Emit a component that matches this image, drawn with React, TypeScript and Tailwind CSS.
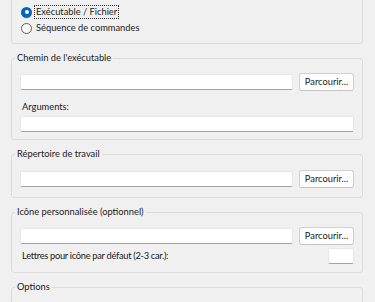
import React from "react";

const font = "[font-family:Lato,'Noto_Sans',sans-serif]";
const ts = "text-[9.3px]";

function Input({ className = "" }: { className?: string }) {
  return (
    <div
      className={`h-[16px] bg-white border border-[#e6e6e6] border-b-[#a3a3a3] rounded-[2px] ${className}`}
    />
  );
}

function Browse() {
  return (
    <button className={`h-[18px] w-[55px] shrink-0 bg-[#fdfdfd] border border-[#d0d0d0] border-b-[#c4c4c4] rounded-[3px] ${ts} leading-[16px] text-[#1a1a1a] text-center`}>
      Parcourir...
    </button>
  );
}

function Group({
  title,
  className = "",
  children,
}: {
  title: string;
  className?: string;
  children?: React.ReactNode;
}) {
  return (
    <fieldset
      className={`border border-[#dcdcdc] rounded-[3px] pl-[8px] pr-[8px] ${className}`}
    >
      <legend className={`ml-[-5px] px-[2px] ${ts} leading-[16px] text-[#1a1a1a]`}>
        {title}
      </legend>
      {children}
    </fieldset>
  );
}

function Radio({ checked, label, focus }: { checked?: boolean; label: string; focus?: boolean }) {
  return (
    <div className="h-[16px] flex items-center">
      {checked ? (
        <span className="ml-[1px] w-[11px] h-[11px] rounded-full bg-[#0067c0] flex items-center justify-center">
          <span className="w-[4px] h-[4px] rounded-full bg-white" />
        </span>
      ) : (
        <span className="ml-[1px] w-[11px] h-[11px] rounded-full border border-[#5f5f5f] bg-[#f7f7f7]" />
      )}
      <span
        className={`ml-[3px] px-[1px] ${ts} leading-[12px] text-[#1a1a1a] ${
          focus ? "outline outline-1 outline-dotted outline-[#333]" : ""
        }`}
      >
        {label}
      </span>
    </div>
  );
}

export default function App() {
  return (
    <div className={`w-[375px] h-[302px] overflow-hidden bg-[#f0f0f0] ${font}`}>
      <div className="pl-[11px] pr-[12px]">
        <div className="mt-[-20px] border border-[#dcdcdc] rounded-[3px] pl-[8px] pt-[23px] pb-[7px]">
          <Radio checked focus label="Exécutable / Fichier" />
          <Radio label="Séquence de commandes" />
        </div>

        <Group title="Chemin de l'exécutable" className="mt-[6px] pt-[7px] pb-[7px]">
          <div className="h-[18px] flex items-center gap-[6px]">
            <Input className="flex-1" />
            <Browse />
          </div>
          <div className={`mt-[8px] ml-[2px] ${ts} leading-[16px] text-[#1a1a1a]`}>Arguments:</div>
          <Input className="mt-[1px]" />
        </Group>

        <Group title="Répertoire de travail" className="mt-[6px] pt-[8px] pb-[9px]">
          <div className="h-[18px] flex items-center gap-[6px]">
            <Input className="flex-1" />
            <Browse />
          </div>
        </Group>

        <Group title="Icône personnalisée (optionnel)" className="mt-[6px] pt-[7px] pb-[8px]">
          <div className="h-[18px] flex items-center gap-[6px]">
            <Input className="flex-1" />
            <Browse />
          </div>
          <div className="mt-[3px] h-[16px] flex items-center justify-between">
            <span className={`ml-[2px] ${ts} tracking-[-0.3px] leading-[16px] text-[#1a1a1a]`}>
              Lettres pour icône par défaut (2-3 car.):
            </span>
            <Input className="w-[26px] h-[15px]" />
          </div>
        </Group>

        <Group title="Options" className="mt-[6px] pt-[8px] pb-[8px]">
          <div className="h-[40px]" />
        </Group>
      </div>
    </div>
  );
}
